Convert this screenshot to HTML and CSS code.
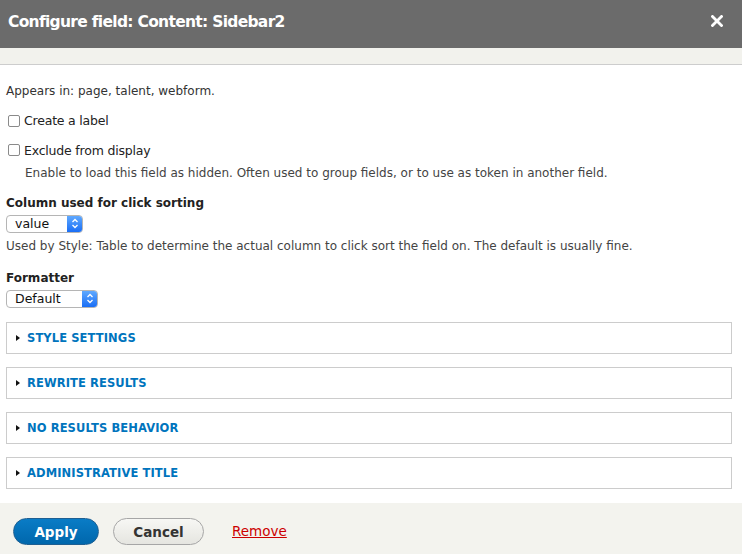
FILE: index.html
```html
<!DOCTYPE html>
<html>
<head>
<meta charset="utf-8">
<link rel="stylesheet" href="styles.css">
</head>
<body>
<div class="dialog">
  <div class="titlebar">
    <span class="title">Configure field: Content: Sidebar2</span>
    <svg class="close" width="12" height="12" viewBox="0 0 12 12"><path d="M1.5 1.5 L10.5 10.5 M10.5 1.5 L1.5 10.5" stroke="#fff" stroke-width="2.8" stroke-linecap="square"/></svg>
  </div>
  <div class="band"></div>
  <div class="content">
    <p class="appears">Appears in: page, talent, webform.</p>
    <label class="check"><span class="box"></span>Create a label</label>
    <label class="check check2"><span class="box"></span>Exclude from display</label>
    <p class="desc indent">Enable to load this field as hidden. Often used to group fields, or to use as token in another field.</p>
    <div class="field-label">Column used for click sorting</div>
    <div class="select sel-value"><span class="sel-text">value</span><span class="sel-btn"><svg width="8" height="11" viewBox="0 0 8 11"><path d="M1.5 4 L4 1.5 L6.5 4 M1.5 7 L4 9.5 L6.5 7" fill="none" stroke="#fff" stroke-width="1.3"/></svg></span></div>
    <p class="desc">Used by Style: Table to determine the actual column to click sort the field on. The default is usually fine.</p>
    <div class="field-label fmt">Formatter</div>
    <div class="select sel-default"><span class="sel-text">Default</span><span class="sel-btn"><svg width="8" height="11" viewBox="0 0 8 11"><path d="M1.5 4 L4 1.5 L6.5 4 M1.5 7 L4 9.5 L6.5 7" fill="none" stroke="#fff" stroke-width="1.3"/></svg></span></div>
    <div class="fieldsets">
      <div class="fs"><span class="tri"></span>STYLE SETTINGS</div>
      <div class="fs"><span class="tri"></span>REWRITE RESULTS</div>
      <div class="fs"><span class="tri"></span>NO RESULTS BEHAVIOR</div>
      <div class="fs"><span class="tri"></span>ADMINISTRATIVE TITLE</div>
    </div>
  </div>
  <div class="footer">
    <span class="btn apply">Apply</span>
    <span class="btn cancel">Cancel</span>
    <a class="remove">Remove</a>
  </div>
</div>
</body>
</html>
```
FILE: styles.css
```css
html, body { margin: 0; padding: 0; background: #fff; }
body { font-family: "DejaVu Sans", "Liberation Sans", sans-serif; color: #333; width: 742px; height: 554px; overflow: hidden; }
.dialog { display: flex; flex-direction: column; height: 554px; }
.titlebar { height: 48px; background: #6b6b6b; display: flex; align-items: center; justify-content: space-between; padding: 0 19px 0 8px; box-sizing: border-box; }
.title { color: #fff; font-weight: bold; font-size: 15.5px; letter-spacing: -0.7px; margin-top: -5px; }
.close { margin-top: -6px; }
.band { height: 16px; background: #f2f2ed; border-bottom: 1px solid #cdcdcd; }
.content { flex: 1; padding: 0 10px 0 6px; font-size: 12px; color: #333; }
p { margin: 0; }
.appears { margin-top: 19px; }
.check { display: flex; align-items: center; font-size: 12.5px; color: #222; margin-top: 15px; margin-left: 2px; letter-spacing: -0.2px; }
.check2 { margin-top: 14.5px; }
.box { width: 10px; height: 10px; border: 1px solid #8a8a8a; border-radius: 2px; margin-right: 4px; background: #fff; }
.desc { color: #444; }
.indent { margin-left: 19px; margin-top: 8px; }
.field-label { font-weight: bold; font-size: 12px; color: #222; margin-top: 16px; }
.fmt { margin-top: 18px; }
.select { display: flex; height: 18px; margin-top: 5px; border: 1px solid #b5b5b5; border-radius: 4px; box-sizing: border-box; overflow: hidden; background: #fff; }
.sel-value { width: 77px; }
.sel-default { width: 92px; margin-top: 5px; }
.sel-text { flex: 1; font-size: 12.5px; color: #111; padding-left: 8px; line-height: 16px; }
.sel-btn { width: 15px; background: linear-gradient(#5fa9ff, #1a6ef5); display: flex; align-items: center; justify-content: center; }
.sel-value + .desc { margin-top: 6px; }
.fieldsets { display: flex; flex-direction: column; gap: 13px; margin-top: 14px; }
.fs { height: 32px; border: 1px solid #cccccc; box-sizing: border-box; display: flex; align-items: center; padding-left: 9px; color: #0074bd; font-weight: bold; font-size: 11.5px; letter-spacing: 0.1px; }
.tri { width: 0; height: 0; border-top: 3.5px solid transparent; border-bottom: 3.5px solid transparent; border-left: 4px solid #111; margin-right: 7px; }
.footer { height: 51px; background: #f3f3ee; display: flex; align-items: flex-start; padding: 15px 0 0 13px; box-sizing: border-box; gap: 14px; }
.btn { height: 27px; border-radius: 14px; box-sizing: border-box; display: flex; align-items: center; justify-content: center; font-weight: bold; font-size: 13.5px; }
.apply { width: 86px; background: linear-gradient(#0a7cc6, #0067ac); color: #fff; border: 1px solid #1e5f92; }
.cancel { width: 91px; background: linear-gradient(#f7f7f4, #e5e5e0); color: #333; border: 1px solid #a6a6a6; }
.remove { color: #c00; text-decoration: underline; font-size: 13.5px; margin-left: 14px; line-height: 27px; }
```
